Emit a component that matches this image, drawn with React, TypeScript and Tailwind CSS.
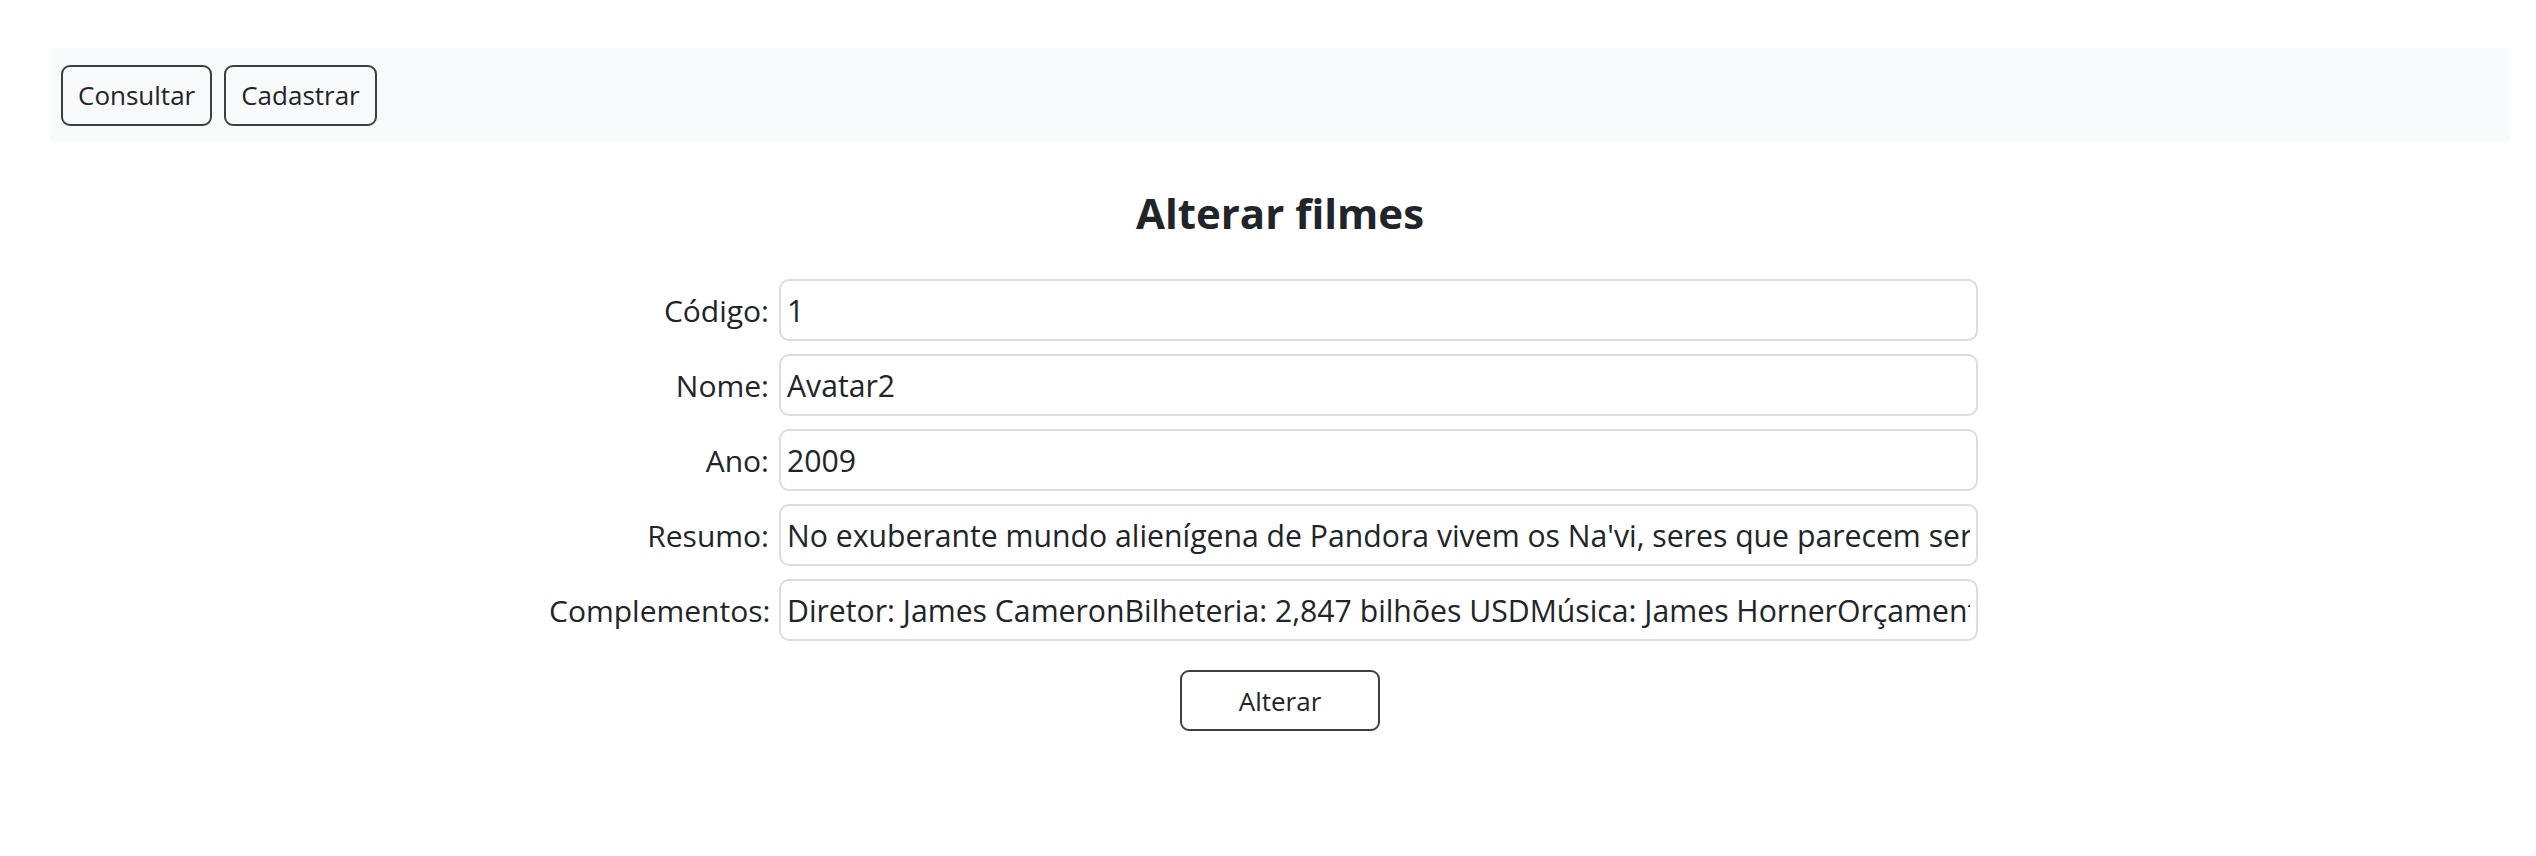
const campos = [
  { label: "Código:", valor: "1" },
  { label: "Nome:", valor: "Avatar2" },
  { label: "Ano:", valor: "2009" },
  {
    label: "Resumo:",
    valor:
      "No exuberante mundo alienígena de Pandora vivem os Na'vi, seres que parecem ser primitivos, mas são altamente evoluídos.",
  },
  {
    label: "Complementos:",
    valor:
      "Diretor: James CameronBilheteria: 2,847 bilhões USDMúsica: James HornerOrçamento: 237 milhões USD",
  },
];

export default function App() {
  return (
    <div className="min-h-screen bg-white pt-[48px] pl-[50px] pr-[26px] text-[#212529] font-['Open_Sans',sans-serif]">
      <nav className="flex items-center gap-[12px] bg-[#f8f9fa] h-[94px] px-[11px]">
        <button
          type="button"
          className="h-[61px] px-[15px] rounded-[9px] border-2 border-[#3c4045] text-[26px] leading-none"
        >
          Consultar
        </button>
        <button
          type="button"
          className="h-[61px] px-[15px] rounded-[9px] border-2 border-[#3c4045] text-[26px] leading-none"
        >
          Cadastrar
        </button>
      </nav>

      <h2 className="text-center text-[42px] font-bold leading-none mt-[50px] mb-[45px]">
        Alterar filmes
      </h2>

      <form className="w-[1462px] mx-auto">
        <div className="grid grid-cols-[220px_1199px] gap-x-[10px] gap-y-[13px] items-center">
          {campos.map((c) => (
            <div key={c.label} className="contents">
              <label className="text-right text-[30px] whitespace-nowrap">
                {c.label}
              </label>
              <input
                readOnly
                defaultValue={c.valor}
                className="h-[62px] w-full rounded-[10px] border-2 border-[#dadde1] px-[6px] text-[30.2px] text-[#212529] outline-none"
              />
            </div>
          ))}
        </div>
      </form>

      <div className="flex justify-center mt-[29px]">
        <button
          type="button"
          className="h-[61px] w-[200px] rounded-[9px] border-2 border-[#3c4045] bg-white text-[26px] leading-none"
        >
          Alterar
        </button>
      </div>
    </div>
  );
}
